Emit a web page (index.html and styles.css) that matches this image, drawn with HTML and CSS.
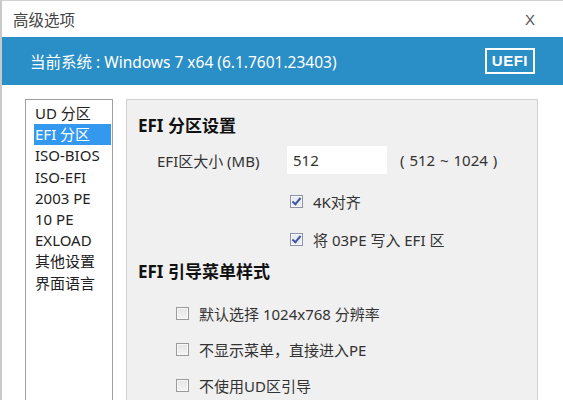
FILE: index.html
```html
<!DOCTYPE html>
<html>
<head>
<meta charset="utf-8">
<link rel="stylesheet" href="styles.css">
</head>
<body>
<div class="window">
  <div class="titlebar">
    <span class="title">高级选项</span>
    <span class="close">X</span>
  </div>
  <div class="band">
    <span class="sys">当前系统 : Windows 7 x64 (6.1.7601.23403)</span>
    <span class="uefi">UEFI</span>
  </div>
  <div class="content">
    <ul class="list">
      <li>UD 分区</li>
      <li class="sel">EFI 分区</li>
      <li>ISO-BIOS</li>
      <li>ISO-EFI</li>
      <li>2003 PE</li>
      <li>10 PE</li>
      <li>EXLOAD</li>
      <li>其他设置</li>
      <li>界面语言</li>
    </ul>
    <div class="panel">
      <div class="heading">EFI 分区设置</div>
      <div class="row size">
        <span class="label">EFI区大小 (MB)</span>
        <span class="input">512</span>
        <span class="range">( 512 ~ 1024 )</span>
      </div>
      <div class="check c1"><span class="box on"></span><span>4K对齐</span></div>
      <div class="check c1"><span class="box on"></span><span>将 03PE 写入 EFI 区</span></div>
      <div class="heading h2">EFI 引导菜单样式</div>
      <div class="check c2"><span class="box"></span><span>默认选择 1024x768 分辨率</span></div>
      <div class="check c2"><span class="box"></span><span>不显示菜单，直接进入PE</span></div>
      <div class="check c2"><span class="box"></span><span>不使用UD区引导</span></div>
    </div>
  </div>
</div>
</body>
</html>
```
FILE: styles.css
```css
* { box-sizing: border-box; }
html, body { margin: 0; padding: 0; }
body {
  width: 563px; height: 400px; overflow: hidden; background: #fff;
  font-family: "Noto Sans", "Noto Sans CJK SC", sans-serif;
  color: #333;
}
.window {
  width: 563px; height: 400px;
  border-left: 2px solid #c9c9c9;
  border-top: 1px solid #d0d0d0;
  display: flex; flex-direction: column;
}
.titlebar {
  height: 36px; display: flex; align-items: center; justify-content: space-between;
  padding: 0 28px 0 11px;
}
.title { font-size: 15.5px; color: #444; }
.close { font-size: 15px; color: #555; font-family: "Liberation Sans", sans-serif; }
.band {
  height: 48px; background: #2a8ec7; display: flex; align-items: center;
  justify-content: space-between; padding: 0 28px 0 28px; color: #fff;
}
.sys { font-size: 15.5px; }
.uefi {
  border: 2px solid #fff; font-family: "Liberation Sans", sans-serif; font-weight: bold;
  font-size: 15px; padding: 2px 5px; line-height: 18px; letter-spacing: 0.5px;
}
.content {
  flex: 1; display: flex; padding: 14px 0 0 23px; gap: 13px; min-height: 0;
}
.list {
  list-style: none; margin: 0; padding: 3px 1px 0 8px;
  width: 88px; border: 1px solid #a0a0a0; border-bottom: none;
  font-size: 15px; color: #222;
}
.list li { height: 21.2px; line-height: 21px; padding-left: 1px; white-space: nowrap; }
.list li.sel { background: #3399ef; color: #fff; }
.panel {
  width: 412px; background: #f0f0f0; border: 1px solid #cfcfcf; border-bottom: none;
  padding: 16px 0 0 11px;
}
.heading { font-size: 17px; font-weight: bold; color: #111; line-height: 20px; }
.h2 { margin-top: 13px; }
.row.size { display: flex; align-items: center; margin-top: 9px; height: 30px; font-size: 15px; }
.label { margin-left: 19px; width: 130px; white-space: nowrap; }
.input {
  width: 100px; height: 28px; background: #fff; line-height: 28px; padding-left: 6px;
  font-size: 15px;
}
.range { margin-left: 13px; word-spacing: 1px; }
.check { display: flex; align-items: center; font-size: 15px; height: 20px; }
.check .box {
  width: 13px; height: 13px; border: 1px solid #9a9a9a; background: linear-gradient(#e4e4e4, #f4f4f4);
  margin-right: 10px; position: relative; box-shadow: inset 0 0 0 1px #f8f8f8;
}
.check .box.on { background: #e8ecf6; border-color: #8c93a8; }
.check .box.on::after {
  content: ""; position: absolute; left: 3px; top: 0px; width: 3px; height: 7px;
  border: solid #3f58a0; border-width: 0 2px 2px 0; transform: rotate(40deg);
}
.c1 { margin-left: 152px; }
.size + .c1 { margin-top: 16px; }
.c1 + .c1 { margin-top: 18px; }
.c2 { margin-left: 38px; margin-top: 16px; }
.h2 + .c2 { margin-top: 21px; }
```
